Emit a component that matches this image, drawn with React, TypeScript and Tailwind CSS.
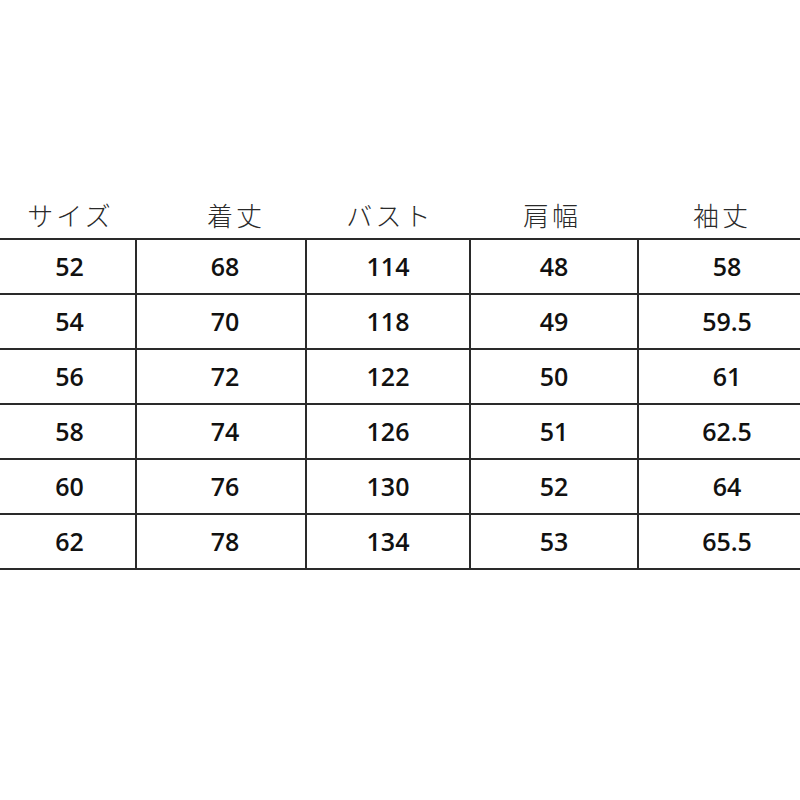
import React from 'react';

const headers = [
  { t: 'サイズ', pad: 'pl-[6px]' },
  { t: '着丈', pad: 'pl-[32px]' },
  { t: 'バスト', pad: 'pl-[6px]' },
  { t: '肩幅', pad: 'pr-[2px]' },
  { t: '袖丈', pad: 'pr-[8px]' },
];

const rows = [
  ['52', '68', '114', '48', '58'],
  ['54', '70', '118', '49', '59.5'],
  ['56', '72', '122', '50', '61'],
  ['58', '74', '126', '51', '62.5'],
  ['60', '76', '130', '52', '64'],
  ['62', '78', '134', '53', '65.5'],
];

const cols = 'grid grid-cols-[135px_170px_164px_168px_178px]';

export default function App() {
  return (
    <div className="w-[800px] h-[800px] bg-white overflow-hidden">
      <div className="w-[815px] pt-[190px]">
        {/* 見出し */}
        <div className={`${cols} h-[48px] items-center`}>
          {headers.map((h) => (
            <div
              key={h.t}
              className={`text-center text-[26px] font-light text-[#2a2a2a] tracking-[0.12em] font-['Noto_Sans_CJK_JP',sans-serif] ${h.pad}`}
            >
              {h.t}
            </div>
          ))}
        </div>

        {/* 表本体 */}
        <div className="border-t-2 border-[#2a2a2a]">
          {rows.map((r, ri) => (
            <div key={ri} className={`${cols} h-[55px] border-b-2 border-[#2a2a2a]`}>
              {r.map((v, ci) => (
                <div
                  key={ci}
                  className={`flex items-center justify-center text-[25px] font-semibold text-[#111] font-['Open_Sans',sans-serif] ${ci > 0 ? 'border-l-2 border-[#2a2a2a]' : ''} ${ci === 0 ? 'pl-[4px]' : ''} ${ci === 1 ? 'pl-[8px]' : ''}`}
                >
                  {v}
                </div>
              ))}
            </div>
          ))}
        </div>
      </div>
    </div>
  );
}
